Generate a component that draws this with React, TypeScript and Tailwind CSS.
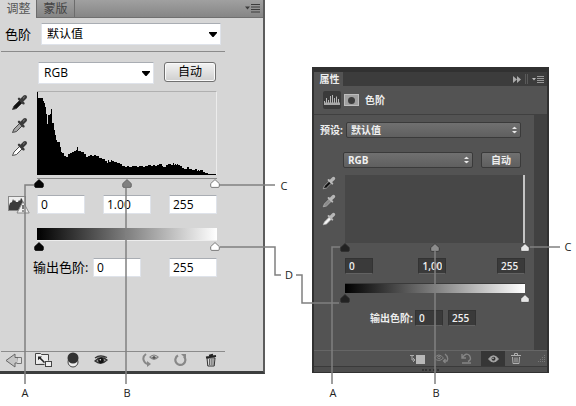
import React, { useState } from 'react';

const FIGURE_WIDTH = 576;

// [x, y] steps of the luminance histogram, measured from the top left of the plot
const HISTOGRAM: [number, number][] = [
  [0, 0], [5, 6], [6, 9], [7, 11], [8, 15], [9, 22], [10, 32], [12, 23], [13, 22], [14, 17],
  [16, 31], [17, 38], [18, 44], [19, 49], [22, 51], [23, 56], [24, 61], [26, 62], [28, 65],
  [30, 66], [32, 63], [34, 62], [36, 61], [38, 60], [39, 59], [40, 56], [41, 60], [43, 60],
  [46, 61], [48, 63], [50, 66], [52, 65], [54, 64], [56, 65], [58, 64], [61, 65], [64, 67],
  [67, 68], [69, 70], [70, 72], [71, 69], [73, 71], [74, 69], [76, 70], [79, 71], [82, 72],
  [84, 73], [87, 75], [89, 76], [92, 75], [95, 76], [100, 75], [102, 76], [106, 75], [108, 76],
  [111, 75], [114, 74], [116, 75], [118, 74], [120, 75], [122, 74], [125, 73], [126, 75],
  [129, 76], [131, 74], [134, 73], [136, 74], [137, 72], [138, 74], [139, 73], [140, 74],
  [141, 73], [143, 74], [145, 75], [147, 77], [150, 78], [152, 76], [155, 78], [158, 79],
  [160, 78], [161, 80], [162, 79], [163, 80], [166, 79], [168, 81], [171, 82], [175, 83], [180, 83],
];

const histogramPath =
  'M0 84' + HISTOGRAM.map(([x, y]) => `V${y}H${x + 1}`).join('') + 'V84Z';

type Tone = 'black' | 'grey' | 'white';

const LIGHT_FILL: Record<Tone, string> = { black: '#050505', grey: '#808080', white: '#ffffff' };
const DARK_FILL: Record<Tone, string> = { black: '#222222', grey: '#8c8c8c', white: '#e6e6e6' };

interface Handle {
  label: string;
  tone: Tone;
  value: number;
}

const LevelSlider: React.FC<{ handles: Handle[]; dark?: boolean }> = ({ handles, dark }) => {
  const [values, setValues] = useState(handles.map((h) => h.value));
  const fills = dark ? DARK_FILL : LIGHT_FILL;

  return (
    <div className={dark ? 'relative h-[9px]' : 'relative mx-[2px] h-[9px]'}>
      {handles.map((h, i) => (
        <React.Fragment key={h.label}>
          <input
            type="range"
            aria-label={h.label}
            min={0}
            max={100}
            value={values[i]}
            onChange={(e) => setValues(values.map((v, j) => (j === i ? Number(e.target.value) : v)))}
            className="absolute inset-0 w-full h-full opacity-0"
          />
          <svg
            className="absolute top-0 w-[11px] h-[9px] -translate-x-1/2 pointer-events-none"
            style={{ left: `${values[i]}%` }}
            viewBox="0 0 11 9"
          >
            <path
              d="M5.5 .6 9.8 4.6V7.2Q9.8 8.4 8.6 8.4H2.4Q1.2 8.4 1.2 7.2V4.6Z"
              fill={fills[h.tone]}
              stroke={dark ? '#303030' : h.tone === 'black' ? '#050505' : '#606060'}
              strokeWidth="0.8"
            />
          </svg>
        </React.Fragment>
      ))}
    </div>
  );
};

const INPUT_HANDLES: Handle[] = [
  { label: '输入阴影', tone: 'black', value: 0 },
  { label: '输入中间调', tone: 'grey', value: 50 },
  { label: '输入高光', tone: 'white', value: 100 },
];

const OUTPUT_HANDLES: Handle[] = [
  { label: '输出阴影', tone: 'black', value: 0 },
  { label: '输出高光', tone: 'white', value: 100 },
];

const Eyedropper: React.FC<{ tip: string; body?: string; className: string }> = ({
  tip,
  body = '#3a3a3a',
  className,
}) => (
  <svg className={className} viewBox="0 0 17 17" fill="none">
    <path d="M1.5 15.5 3 12 9 6l2.5 2.5-6 6-3 .8Z" fill={tip} stroke={body} strokeWidth="0.9" />
    <path d="m8 4.8 4.5 4.5" stroke={body} strokeWidth="2.4" strokeLinecap="round" />
    <path d="m11 6 3-3" stroke={body} strokeWidth="4" strokeLinecap="round" />
    <path d="m12.2 4.2 1.5-1.4" stroke="#a8a8a8" strokeWidth="0.8" />
  </svg>
);

const MenuIcon: React.FC<{ color: string }> = ({ color }) => (
  <svg className="w-[15px] h-[9px]" viewBox="0 0 15 9">
    <path d="M0 2.5h5L2.5 5.5Z" fill={color} />
    <path d="M6 .5h9M6 3h9M6 5.5h9M6 8h9" stroke={color} />
  </svg>
);

// Light panel

const LightSelect: React.FC<{ label: string; options: string[]; className: string }> = ({
  label,
  options,
  className,
}) => (
  <div className={`relative ${className}`}>
    <select
      aria-label={label}
      className="block w-full h-full appearance-none bg-white border border-[#dfe3ea] border-t-[#a9adb3] pl-[5px] text-[12px] leading-none text-black"
    >
      {options.map((o) => (
        <option key={o}>{o}</option>
      ))}
    </select>
    <svg className="absolute right-1 top-1/2 -mt-[2px] w-2 h-[5px] pointer-events-none" viewBox="0 0 8 5">
      <path d="M0 0h8v1L4.5 5h-1L0 1Z" />
    </svg>
  </div>
);

const LightField: React.FC<{ label: string; value: string }> = ({ label, value }) => (
  <input
    aria-label={label}
    defaultValue={value}
    className="w-[48px] h-[19px] bg-white border border-[#dfe3ea] border-t-[#a9adb3] px-[3px] text-[12px] leading-none text-black"
  />
);

const LightPanel: React.FC = () => (
  <section className="min-w-0 mr-px bg-[#d6d6d6] border-r-2 border-b-[3px] border-r-[#5c5c5c] border-b-[#3c3e3e] text-[13px] text-black">
    {/* Tabs */}
    <div className="flex h-[18px] items-stretch bg-linear-to-b/srgb from-[#a0a0a0] to-[#868686] border-b border-[#707070] text-[12px] leading-none">
      <button className="w-[36px] -mb-px bg-[#d6d6d6] pl-px text-[#555]">调整</button>
      <button className="w-[39px] border-x border-[#6c6c6c] text-[#444]">蒙版</button>
      <button aria-label="面板菜单" className="ml-auto mr-[3px]">
        <MenuIcon color="#3c3c3c" />
      </button>
    </div>

    <div className="flex items-center pt-[5px] pl-[5px] pr-[42px]">
      <span className="w-[36px] leading-none">色阶</span>
      <LightSelect label="色阶" options={['默认值']} className="flex-1 h-[22px]" />
    </div>
    <hr className="mt-[6px] ml-px mr-[38px] border-[#8b8b8b]" />

    <div className="flex items-start mt-[10px] pl-[38px] pr-[47px]">
      <LightSelect label="通道" options={['RGB']} className="flex-1 h-[22px]" />
      <button className="ml-[10px] w-[52px] h-[20px] rounded-[3px] border border-[#707070] bg-linear-to-b/srgb from-[#f3f3f3] to-[#cfcfcf] text-[12px] leading-none shadow-[inset_0_0_0_1px_#fafafa]">
        自动
      </button>
    </div>

    <div className="flex mt-[7px] pr-[46px]">
      <div className="w-[37px] pl-[11px] pt-[3px] flex flex-col gap-[6px]">
        <Eyedropper tip="#111111" className="w-[17px] h-[17px]" />
        <Eyedropper tip="#a5a5a5" className="w-[17px] h-[17px]" />
        <Eyedropper tip="#ffffff" className="w-[17px] h-[17px]" />
      </div>
      <div className="flex-1 h-[84px] border-t border-r border-t-[#b0b0b0] border-r-[#ececec]">
        <svg className="w-full h-full" viewBox="0 0 180 84" preserveAspectRatio="none">
          <path d={histogramPath} shapeRendering="crispEdges" />
        </svg>
      </div>
    </div>

    <div className="mt-[3px] pl-[37px] pr-[46px]">
      <hr className="border-[#8a8a8a]" />
      <LevelSlider handles={INPUT_HANDLES} />
    </div>

    <div className="flex mt-[7px] pr-[46px]">
      <div className="w-[37px] pl-[8px]">
        <svg className="w-[22px] h-[20px]" viewBox="0 0 22 20">
          <rect x=".5" y="1.5" width="17" height="14" fill="#eee" stroke="#888" />
          <path d="M1 15V11l1-3 2-1 1-3 1 2 1-1 1 2 2 0 1-2 1 1 1-3 1 1 1 3 1 0v8Z" fill="#3b3b3b" />
          <path d="M15 6.5 21.2 18H9Z" fill="#eee" stroke="#888" />
          <path d="M15 10v4M15 15.3v1.5" stroke="#444" strokeWidth="1.4" />
        </svg>
      </div>
      <div className="flex-1 flex justify-between">
        <LightField label="输入阴影值" value="0" />
        <LightField label="输入中间调值" value="1.00" />
        <LightField label="输入高光值" value="255" />
      </div>
    </div>

    <div className="mt-[13px] pl-[37px] pr-[46px]">
      <div className="h-[12px] bg-linear-to-r/srgb from-black to-white" />
      <div className="h-px mb-px bg-[#ededed]" />
      <LevelSlider handles={OUTPUT_HANDLES} />
    </div>

    <div className="flex items-center mt-[7px] pl-[33px] pr-[46px]">
      <span className="w-[60px] leading-none whitespace-nowrap">输出色阶:</span>
      <div className="flex-1 flex justify-between">
        <LightField label="输出阴影值" value="0" />
        <LightField label="输出高光值" value="255" />
      </div>
    </div>

    <div className="flex items-center mt-[74px] ml-px mr-[38px] h-[20px] pl-[4px] pr-[8px] pb-[3px] border-t border-[#8b8b8b]">
      <button aria-label="返回">
        <svg className="w-[18px] h-[15px]" viewBox="0 0 18 15">
          <path d="M1 7.5 10 1v3.5h3V10h-3v4Z" fill="#c4c4c4" stroke="#666" />
          <path d="M13 4.5h3.500v6H12" fill="#ddd" stroke="#777" />
        </svg>
      </button>
      <button aria-label="展开视图" className="ml-[12px]">
        <svg className="w-[18px] h-[16px]" viewBox="0 0 18 16">
          <path d="M.5 12.5V1.5h5l1 1h7v6M.5 12.5h9" fill="#ededed" stroke="#444" />
          <path d="M3 4.5h4L5.8 5.7 10 10 9 11 4.5 6.8 3 8.2Z" fill="#222" />
          <rect x="10.5" y="9.5" width="6" height="5" fill="#eee" stroke="#444" />
        </svg>
      </button>
      <button aria-label="剪切到图层" className="ml-[14px]">
        <svg className="w-[12px] h-[16px]" viewBox="0 0 12 16">
          <circle cx="6" cy="10" r="5" fill="#eee" stroke="#444" />
          <circle cx="6" cy="6" r="5.5" fill="#333" />
        </svg>
      </button>
      <button aria-label="可见性" className="ml-[15px]">
        <svg className="w-[14px] h-[12px]" viewBox="0 0 14 12">
          <path d="M1 4Q6 0 13 3.5M1 7Q7 1 13 6 7 12 1 7Z" fill="#999" stroke="#333" strokeWidth="1.3" />
          <circle cx="7" cy="6.5" r="2.8" fill="#111" />
          <circle cx="6.3" cy="5.7" r=".8" fill="#eee" />
        </svg>
      </button>
      <div className="ml-auto flex items-center gap-[15px]">
        <button aria-label="查看上一状态">
          <svg className="w-[17px] h-[14px]" viewBox="0 0 17 14" fill="none">
            <path d="M4 1Q0 4 2 8q1 3 5 3" stroke="#888" strokeWidth="2" />
            <path d="M5 8v6l4-3Z" fill="#888" />
            <path d="M7 4q5-5 10 0-5 6-10 0Z" fill="#858585" />
            <path d="M9 4q3-2 6 0" stroke="#c5c5c5" />
            <circle cx="12" cy="4.5" r="1.3" fill="#555" />
          </svg>
        </button>
        <button aria-label="复位">
          <svg className="w-[13px] h-[14px]" viewBox="0 0 13 14" fill="none">
            <path d="M4 2.5A5 5 0 1 0 10 3.5" stroke="#888" strokeWidth="2.2" />
            <path d="M7 1h5v5Z" fill="#888" />
          </svg>
        </button>
        <button aria-label="删除" className="ml-[3px]">
          <svg className="w-[12px] h-[14px]" viewBox="0 0 12 14">
            <path d="m2 5 .8 8h6.4L10 5Z" fill="#ddd" stroke="#333" />
            <path d="M1 4.5 11 3M4 2.5 8 1.5" stroke="#222" strokeWidth="1.8" />
            <path d="M4.5 6v6M6.2 6v6M8 6v6" stroke="#444" strokeWidth="0.8" />
          </svg>
        </button>
      </div>
    </div>
  </section>
);

// Dark panel

const DarkSelect: React.FC<{ label: string; options: string[]; className: string }> = ({
  label,
  options,
  className,
}) => (
  <div className={`relative ${className}`}>
    <select
      aria-label={label}
      className="block w-full h-full appearance-none rounded-[2px] border border-[#3a3a3a] bg-linear-to-b/srgb from-[#707070] to-[#5f5f5f] pl-[4px] text-[10px] leading-none font-bold text-[#f0f0f0]"
    >
      {options.map((o) => (
        <option key={o}>{o}</option>
      ))}
    </select>
    <svg className="absolute right-[4px] top-1/2 -translate-y-1/2 w-[5px] h-[7px] pointer-events-none" viewBox="0 0 5 7" fill="#e8e8e8">
      <path d="M0 2.5h5L2.5 0ZM0 4.5h5L2.5 7Z" />
    </svg>
  </div>
);

const DarkField: React.FC<{ label: string; value: string }> = ({ label, value }) => (
  <input
    aria-label={label}
    defaultValue={value}
    className="w-[28px] h-[16px] bg-[#3a3a3a] border border-[#333] border-b-[#626262] px-[3px] text-[10px] leading-none font-semibold text-[#f0f0f0]"
  />
);

const DarkPanel: React.FC = () => (
  <section className="min-w-0 mt-[67px] border-x-2 border-t-[5px] border-b border-[#313131] bg-[#535353] text-[10px] font-bold text-[#ededed]">
    {/* Header */}
    <div className="flex h-[14px] items-stretch bg-[#3c3c3c] leading-none">
      <button className="w-[29px] bg-[#535353] pl-[2px]">属性</button>
      <div className="ml-auto mr-[3px] flex items-center gap-[4px]">
        <button aria-label="折叠">
          <svg className="w-[8px] h-[7px]" viewBox="0 0 8 7" fill="#aaa">
            <path d="M0 0 4 3.5 0 7ZM4 0 8 3.5 4 7Z" />
          </svg>
        </button>
        <span className="w-[3px] h-[10px] border-x border-[#5a5a5a]" />
        <button aria-label="面板菜单">
          <svg className="w-[12px] h-[7px]" viewBox="0 0 12 7">
            <path d="M0 2h4L2 4.5Z" fill="#bbb" />
            <path d="M5 .5h7M5 2.5h7M5 4.5h7M5 6.5h7" stroke="#999" />
          </svg>
        </button>
      </div>
    </div>

    <div className="flex items-center h-[29px] pl-[9px] border-b border-[#404040]">
      <button aria-label="色阶调整" className="flex w-[18px] h-[18px] items-center justify-center rounded-[2px] bg-[#3a3a3a]">
        <svg className="w-[16px] h-[12px]" viewBox="0 0 16 12">
          <path d="M.5 11V7M2.5 11V4M4.5 11V6M6.5 11V2M8.5 11V1M10.5 11V4M12.5 11V2.500M14.5 11V5" stroke="#b5b5b5" />
          <path d="M0 8.500h16V11H0Z" fill="#a8a8a8" />
        </svg>
      </button>
      <button aria-label="图层蒙版" className="ml-[3px] flex w-[15px] h-[12px] items-center justify-center border border-[#bdbdbd] bg-[#a0a0a0]">
        <span className="w-[7px] h-[7px] rounded-full bg-[#3d3d3d]" />
      </button>
      <h2 className="ml-[6px] leading-none">色阶</h2>
    </div>

    <div className="border-r-[13px] border-r-[#414141] pt-[7px] pb-[24px] pr-[9px]">
      <div className="flex items-center pl-[6px] pr-[4px]">
        <span className="w-[26px] leading-none whitespace-nowrap">预设:</span>
        <DarkSelect label="预设" options={['默认值']} className="flex-1 h-[16px]" />
      </div>

      <div className="flex items-center mt-[14px] pl-[29px] pr-[4px]">
        <DarkSelect label="通道" options={['RGB']} className="flex-1 h-[16px]" />
        <button className="ml-[8px] w-[40px] h-[16px] rounded-[2px] border border-[#3a3a3a] bg-linear-to-b/srgb from-[#707070] to-[#5f5f5f] leading-none">
          自动
        </button>
      </div>

      <div className="flex mt-[7px]">
        <div className="w-[31px] pl-[8px] pt-px flex flex-col gap-[4px]">
          <Eyedropper tip="#111111" body="#b8b8b8" className="w-[14px] h-[14px]" />
          <Eyedropper tip="#8a8a8a" body="#b8b8b8" className="w-[14px] h-[14px]" />
          <Eyedropper tip="#f5f5f5" body="#b8b8b8" className="w-[14px] h-[14px]" />
        </div>
        <div className="flex-1 h-[68px] bg-[#474747] border-r-2 border-[#c4c4c4]" />
      </div>

      <div className="pl-[31px]">
        <LevelSlider handles={INPUT_HANDLES} dark />
        <div className="flex mt-[6px]">
          <DarkField label="输入阴影值" value="0" />
          <div className="flex-9" />
          <DarkField label="输入中间调值" value="1,00" />
          <div className="flex-10" />
          <DarkField label="输入高光值" value="255" />
        </div>
        <div className="mt-[9px] mb-px h-[10px] border-t border-[#3a3a3a] bg-linear-to-r/srgb from-black to-white" />
        <LevelSlider handles={OUTPUT_HANDLES} dark />
      </div>

      <div className="flex items-center mt-[7px] pl-[56px]">
        <span className="w-[45px] leading-none whitespace-nowrap">输出色阶:</span>
        <DarkField label="输出阴影值" value="0" />
        <div className="ml-[5px] flex">
          <DarkField label="输出高光值" value="255" />
        </div>
      </div>
    </div>

    <div className="flex items-center justify-end h-[16px] border-t border-[#666]">
      <button aria-label="剪切到图层" className="mr-[9px]">
        <svg className="w-[15px] h-[10px]" viewBox="0 0 15 10">
          <rect x="6" y="1" width="9" height="9" fill="#b8b8b8" />
          <path d="M0 1.500h4M2 1v5h3M3 4l2 2-2 2" stroke="#aaa" fill="none" />
        </svg>
      </button>
      <button aria-label="查看上一状态" className="mr-[12px]">
        <svg className="w-[15px] h-[11px]" viewBox="0 0 15 11" fill="none" stroke="#858585">
          <path d="M.5 5q4-6 9 0-5 5-9 0Z" />
          <circle cx="5" cy="4.500" r="1.300" />
          <path d="M11 1q4 3 2 7h-3M11.500 6 9.500 8l2 2" strokeWidth="1.300" />
        </svg>
      </button>
      <button aria-label="复位" className="mr-[9px]">
        <svg className="w-[11px] h-[11px]" viewBox="0 0 11 11" fill="none" stroke="#858585" strokeWidth="1.400">
          <path d="M1.500 4.500Q5-1 8.500 2.500 11 7 7 8.500M1 1v4h4M1 10h9" />
        </svg>
      </button>
      <button aria-label="可见性" className="flex w-[24px] h-[15px] items-center justify-center bg-[#363636]">
        <svg className="w-[11px] h-[8px]" viewBox="0 0 11 8">
          <path d="M.5 4q5-6.500 10 0-5 6-10 0Z" fill="#aaa" stroke="#a5a5a5" />
          <circle cx="5.500" cy="3.800" r="2" fill="#333" />
          <circle cx="5" cy="3.200" r=".7" fill="#ddd" />
        </svg>
      </button>
      <button aria-label="删除" className="ml-[6px]">
        <svg className="w-[10px] h-[11px]" viewBox="0 0 10 11" stroke="#b0b0b0" fill="none">
          <path d="M0 2.500h10M3.500 2V.5h3V2M1.500 4l.5 6.500h6L8.500 4M4 4.500v5M6 4.500v5" />
        </svg>
      </button>
      <svg className="ml-[15px] mr-[2px] w-[9px] h-[9px]" viewBox="0 0 9 9" stroke="#777" strokeDasharray="1 1">
        <path d="M8.500 1v8M6.500 3v6M4.500 5v4M2.500 7v2" />
      </svg>
    </div>
    <div className="flex h-[6px] items-center justify-center border-t border-[#3a3a3a] bg-[#4d4d4d]">
      <span className="w-[17px] border-t-2 border-dotted border-[#333]" />
    </div>
  </section>
);

// Callout lines and their letters

const LEADERS = [
  'M34 185H25V384',
  'M126 188V384',
  'M219 185H275',
  'M220 247H275V275H281',
  'M296 275H302V303H339',
  'M340 247H332V384',
  'M435 251V384',
  'M530 247H560',
];

const LETTERS = [
  { text: 'A', x: 25, top: 'top-[386px]' },
  { text: 'B', x: 127, top: 'top-[386px]' },
  { text: 'C', x: 284, top: 'top-[179px]' },
  { text: 'D', x: 289, top: 'top-[268px]' },
  { text: 'A', x: 333, top: 'top-[386px]' },
  { text: 'B', x: 436, top: 'top-[386px]' },
  { text: 'C', x: 568, top: 'top-[240px]' },
];

const Callouts: React.FC = () => (
  <div className="absolute inset-0 pointer-events-none">
    <svg className="w-full h-[406px]" viewBox="0 0 576 406" preserveAspectRatio="none">
      {LEADERS.map((d) => (
        <path key={d} d={d} fill="none" stroke="#808080" strokeWidth="1.500" />
      ))}
    </svg>
    {LETTERS.map((l) => (
      <span
        key={l.text + l.x}
        className={`absolute -translate-x-1/2 text-[11px] leading-[14px] text-[#222] ${l.top}`}
        style={{ left: `${(l.x / FIGURE_WIDTH) * 100}%` }}
      >
        {l.text}
      </span>
    ))}
  </div>
);

export default function App() {
  return (
    <main className="relative overflow-hidden bg-white pb-8 font-['Open_Sans','Noto_Sans_CJK_SC',sans-serif]">
      <div className="grid grid-cols-[266fr_46fr_237fr_27fr] items-start">
        <LightPanel />
        <div />
        <DarkPanel />
      </div>
      <Callouts />
    </main>
  );
}
